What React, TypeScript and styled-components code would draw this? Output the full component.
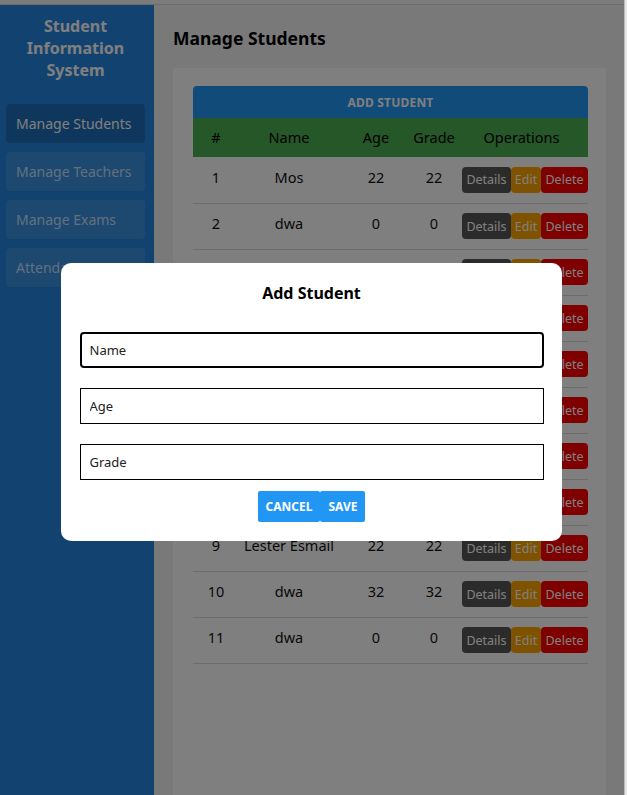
import React from "react";
import styled, { createGlobalStyle, css } from "styled-components";

const GlobalStyle = createGlobalStyle`
  html, body { margin: 0; padding: 0; }
  body { font-family: "Noto Sans", "Open Sans", sans-serif; color: #111; overflow: hidden; }
  * { box-sizing: border-box; }
`;

const Page = styled.div`
  display: flex;
  height: 100vh;
`;

const Viewport = styled.div`
  flex: 1;
  display: flex;
  flex-direction: column;
  background: #ffffff;
`;

const TopStrip = styled.div`
  height: 5px;
  background: #f6f6f6;
  border-bottom: 1px solid #d6d6d6;
`;

const Body = styled.div`
  flex: 1;
  display: flex;
  min-height: 0;
`;

const ScrollTrack = styled.div`
  width: 3px;
  background: #e4e4e4;
  border-left: 1px solid #bdbdbd;
`;

const Sidebar = styled.aside`
  width: 154px;
  flex-shrink: 0;
  background: #2586e0;
  padding: 10px 9px 0 6px;
  display: flex;
  flex-direction: column;
`;

const Brand = styled.h1`
  margin: 0 0 23px;
  font-size: 16px;
  line-height: 22px;
  font-weight: 700;
  color: #ffffff;
  text-align: center;
  padding: 0 4px;
`;

const Nav = styled.nav`
  display: flex;
  flex-direction: column;
  gap: 9px;
`;

const NavItem = styled.div<{ $active?: boolean }>`
  height: 39px;
  display: flex;
  align-items: center;
  padding-left: 10px;
  border-radius: 4px;
  font-size: 14px;
  white-space: nowrap;
  overflow: hidden;
  ${(p) =>
    p.$active
      ? css`
          background: rgba(0, 0, 0, 0.17);
          color: #ffffff;
        `
      : css`
          background: rgba(255, 255, 255, 0.1);
          color: rgba(255, 255, 255, 0.72);
        `}
`;

const Main = styled.main`
  flex: 1;
  background: #f3f3f3;
  padding: 20px 18px 0 19px;
  display: flex;
  flex-direction: column;
  min-width: 0;
`;

const Heading = styled.h2`
  margin: 0 0 17px;
  font-size: 17.5px;
  line-height: 26px;
  font-weight: 700;
  color: #000;
`;

const Card = styled.section`
  flex: 1;
  background: #ffffff;
  padding: 18px 18px 0 20px;
`;

const AddBar = styled.button`
  display: block;
  width: 100%;
  height: 32px;
  border: none;
  border-radius: 4px 4px 0 0;
  background: #2196f3;
  color: #ffffff;
  font-family: "Noto Sans", sans-serif;
  font-weight: 700;
  font-size: 12px;
  letter-spacing: 0.2px;
  text-transform: uppercase;
`;

const Table = styled.table`
  width: 100%;
  border-collapse: collapse;
  table-layout: fixed;
  font-size: 14.5px;
`;

const HeadRow = styled.tr`
  background: #4caf50;
`;

const Th = styled.th`
  height: 39px;
  padding: 0 0 1px;
  font-weight: 400;
  color: #000;
  text-align: center;
`;

const Tr = styled.tr`
  border-bottom: 1px solid #d8d8d8;
`;

const Td = styled.td`
  height: 46px;
  padding: 0 0 6px;
  text-align: center;
  color: #111;
  white-space: nowrap;
  vertical-align: middle;
`;

const OpsCell = styled.td`
  height: 46px;
  padding: 0;
  vertical-align: middle;
`;

const Ops = styled.div`
  display: flex;
  justify-content: flex-end;
`;

const OpButton = styled.button<{ $kind: "details" | "edit" | "delete" }>`
  height: 26px;
  border: none;
  border-radius: 4px;
  padding: 0 3px;
  font-family: "Noto Sans", sans-serif;
  font-size: 12.5px;
  color: #ffffff;
  background: ${(p) =>
    p.$kind === "details" ? "#575757" : p.$kind === "edit" ? "#ffa500" : "#ff0000"};
  ${(p) => p.$kind === "details" && css`width: 49px;`}
  ${(p) => p.$kind === "edit" && css`width: 30px;`}
  ${(p) => p.$kind === "delete" && css`width: 47px;`}
`;

const Overlay = styled.div`
  position: fixed;
  top: 0;
  left: 0;
  bottom: 0;
  right: 3px;
  background: rgba(0, 0, 0, 0.5);
  display: flex;
  align-items: center;
  justify-content: center;
  padding-top: 9px;
  padding-right: 2px;
`;

const Modal = styled.div`
  width: 501px;
  background: #ffffff;
  border-radius: 10px;
  padding: 18px 18px 19px 19px;
  display: flex;
  flex-direction: column;
`;

const ModalTitle = styled.h3`
  margin: 0 0 27px;
  font-size: 16px;
  line-height: 24px;
  font-weight: 700;
  text-align: center;
  color: #000;
`;

const Form = styled.div`
  display: flex;
  flex-direction: column;
  gap: 20px;
`;

const Field = styled.input<{ $focused?: boolean }>`
  width: 100%;
  height: 36px;
  padding: 0 9px;
  font-family: "Noto Sans", sans-serif;
  font-size: 13px;
  color: #111;
  background: #fff;
  outline: none;
  ${(p) =>
    p.$focused
      ? css`
          border: 2px solid #000;
          border-radius: 4px;
          padding-left: 8px;
        `
      : css`
          border: 1px solid #000;
          border-radius: 0;
        `}
  &::placeholder {
    color: #222;
    opacity: 1;
  }
`;

const Actions = styled.div`
  display: flex;
  justify-content: center;
  margin-top: 11px;
`;

const ActionButton = styled.button`
  height: 31px;
  padding: 0 8px;
  border: none;
  border-radius: 2px;
  background: #2196f3;
  color: #ffffff;
  font-family: "Noto Sans", sans-serif;
  font-weight: 700;
  font-size: 12px;
  text-transform: uppercase;
`;

type Student = { id: number; name: string; age: number; grade: number };

const students: Student[] = [
  { id: 1, name: "Mos", age: 22, grade: 22 },
  { id: 2, name: "dwa", age: 0, grade: 0 },
  { id: 3, name: "Sara", age: 19, grade: 19 },
  { id: 4, name: "dwa", age: 0, grade: 0 },
  { id: 5, name: "John", age: 21, grade: 21 },
  { id: 6, name: "dwa", age: 12, grade: 12 },
  { id: 7, name: "Amir", age: 20, grade: 20 },
  { id: 8, name: "dwa", age: 0, grade: 0 },
  { id: 9, name: "Lester Esmail", age: 22, grade: 22 },
  { id: 10, name: "dwa", age: 32, grade: 32 },
  { id: 11, name: "dwa", age: 0, grade: 0 },
];

export default function App() {
  return (
    <>
      <GlobalStyle />
      <Page>
        <Viewport>
          <TopStrip />
          <Body>
            <Sidebar>
              <Brand>Student Information System</Brand>
              <Nav>
                <NavItem $active>Manage Students</NavItem>
                <NavItem>Manage Teachers</NavItem>
                <NavItem>Manage Exams</NavItem>
                <NavItem>Attendance</NavItem>
              </Nav>
            </Sidebar>
            <Main>
              <Heading>Manage Students</Heading>
              <Card>
                <AddBar>Add Student</AddBar>
                <Table>
                  <colgroup>
                    <col style={{ width: 46 }} />
                    <col style={{ width: 100 }} />
                    <col style={{ width: 74 }} />
                    <col style={{ width: 42 }} />
                    <col />
                  </colgroup>
                  <thead>
                    <HeadRow>
                      <Th>#</Th>
                      <Th>Name</Th>
                      <Th>Age</Th>
                      <Th>Grade</Th>
                      <Th>Operations</Th>
                    </HeadRow>
                  </thead>
                  <tbody>
                    {students.map((s) => (
                      <Tr key={s.id}>
                        <Td>{s.id}</Td>
                        <Td>{s.name}</Td>
                        <Td>{s.age}</Td>
                        <Td>{s.grade}</Td>
                        <OpsCell>
                          <Ops>
                            <OpButton $kind="details">Details</OpButton>
                            <OpButton $kind="edit">Edit</OpButton>
                            <OpButton $kind="delete">Delete</OpButton>
                          </Ops>
                        </OpsCell>
                      </Tr>
                    ))}
                  </tbody>
                </Table>
              </Card>
            </Main>
          </Body>
        </Viewport>
        <ScrollTrack />
      </Page>
      <Overlay>
        <Modal>
          <ModalTitle>Add Student</ModalTitle>
          <Form>
            <Field $focused placeholder="Name" />
            <Field placeholder="Age" />
            <Field placeholder="Grade" />
          </Form>
          <Actions>
            <ActionButton>Cancel</ActionButton>
            <ActionButton>Save</ActionButton>
          </Actions>
        </Modal>
      </Overlay>
    </>
  );
}
